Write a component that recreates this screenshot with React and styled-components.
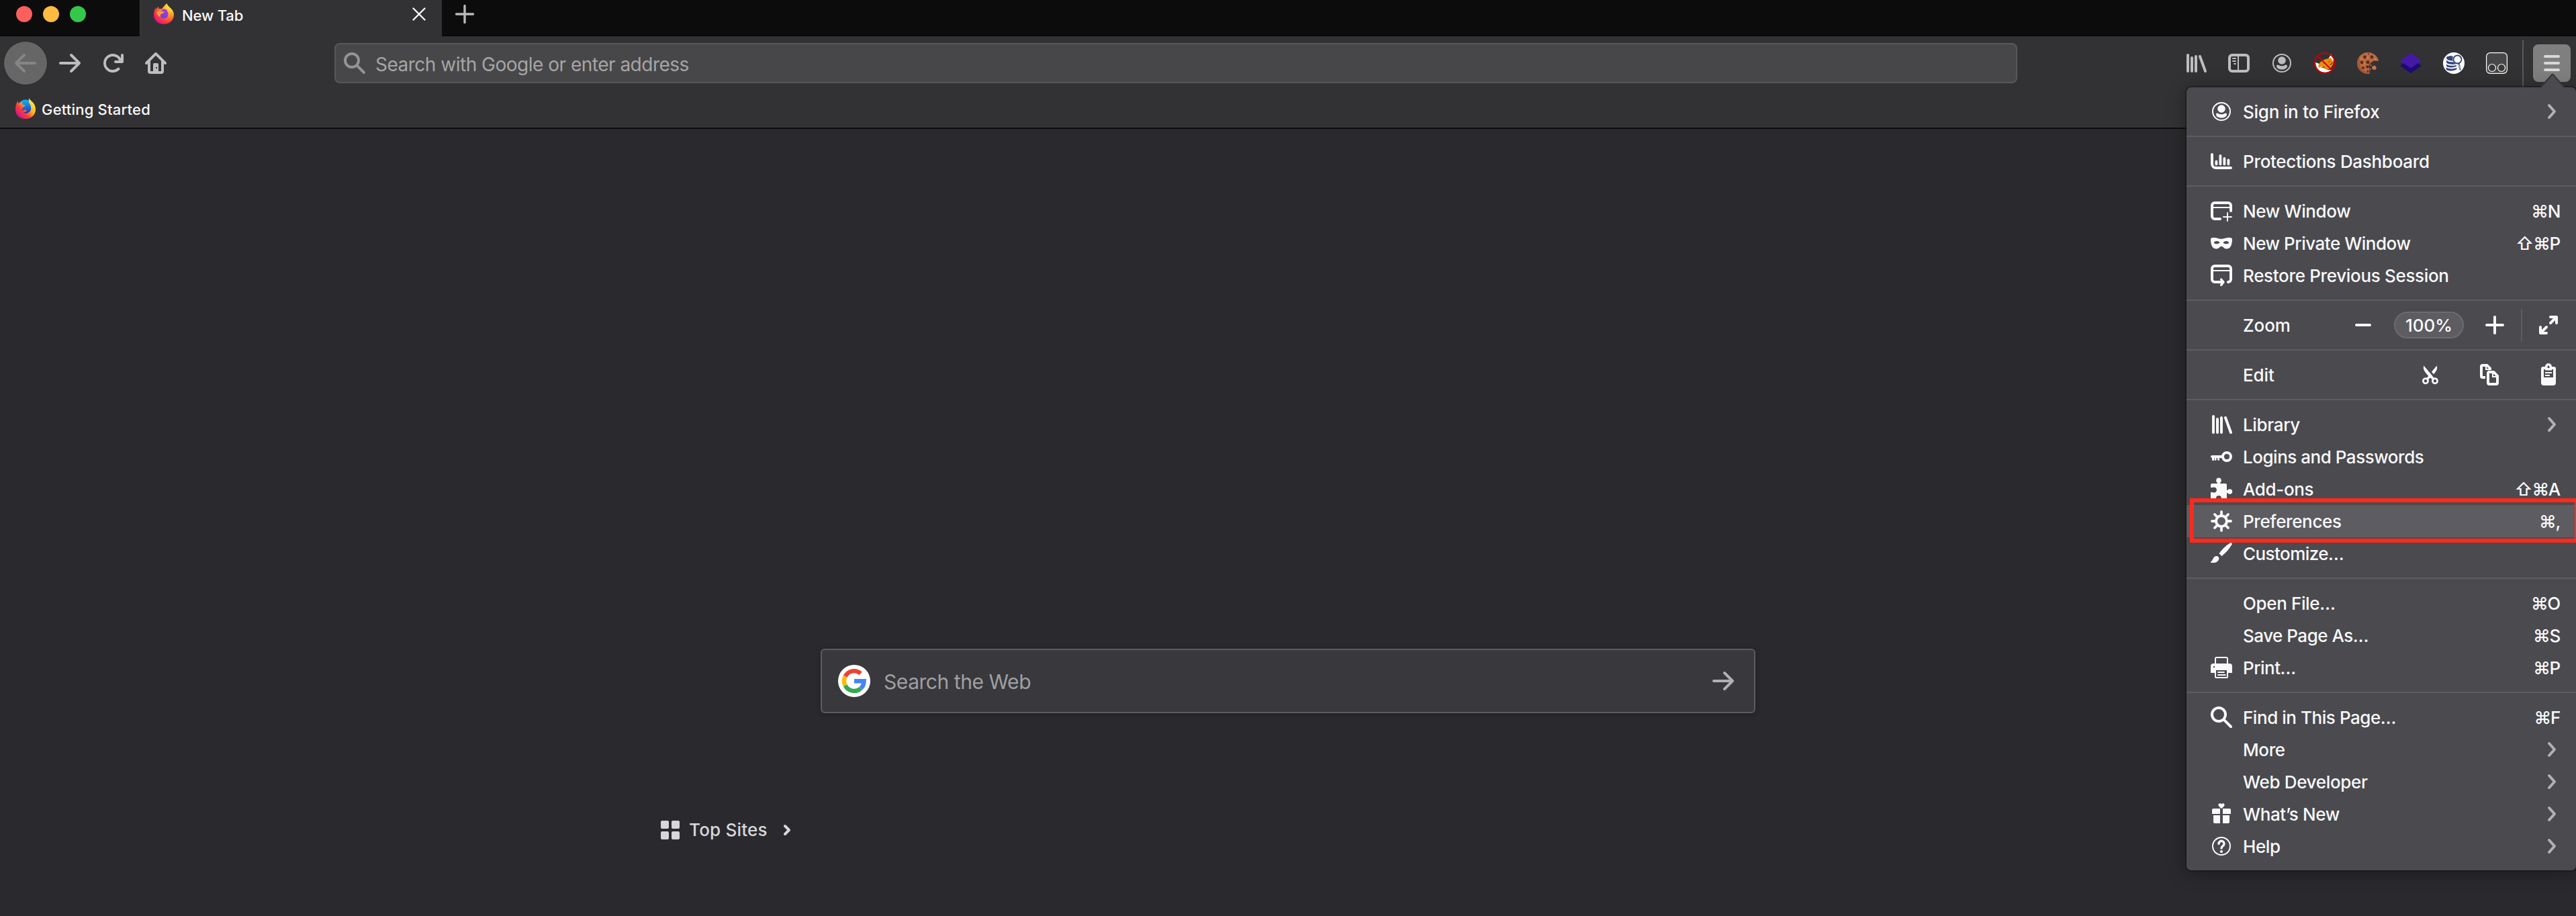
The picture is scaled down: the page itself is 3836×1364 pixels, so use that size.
import React from "react";
import styled, { createGlobalStyle } from "styled-components";

const GlobalStyle = createGlobalStyle`
  * { box-sizing: border-box; }
  body { margin: 0; background: #2a2a2e; }
`;

/* ---------- window frame ---------- */

const Window = styled.div`
  position: relative;
  display: flex;
  flex-direction: column;
  width: 3836px;
  height: 1364px;
  overflow: hidden;
  background: #2a2a2e;
  color: #f9f9fa;
  font-family: Inter, "Liberation Sans", sans-serif;
  font-weight: 500;
  font-size: 26px;
  white-space: nowrap;
`;

const Icon = styled.svg`
  display: block;
  flex: none;
  width: ${(p) => p.$size || 32}px;
  height: ${(p) => p.$size || 32}px;
  color: ${(p) => p.$color || "inherit"};
  overflow: visible;
`;

const TabStrip = styled.header`
  display: flex;
  flex: none;
  height: 54px;
  background: #0c0c0d;
  box-shadow: inset 0 -1px 0 #050505;
`;

const TrafficLights = styled.div`
  display: flex;
  gap: 16px;
  width: 208px;
  padding: 9px 0 0 24px;
`;

const Light = styled.span`
  width: 24px;
  height: 24px;
  border-radius: 50%;
  background: ${(p) => p.$color};
`;

const Tab = styled.div`
  display: flex;
  align-items: center;
  width: 450px;
  padding: 0 24px 12px 19px;
  background: #323234;
  border-left: 1px solid #3c3c3e;
`;

const TabTitle = styled.span`
  flex: 1;
  padding: 4px 0 0 11px;
  font-size: 22px;
  line-height: 26px;
  letter-spacing: -0.15px;
`;

const NewTabButton = styled.div`
  padding: 7px 0 0 20px;
`;

const NavBar = styled.nav`
  display: flex;
  flex: none;
  align-items: center;
  height: 80px;
  padding: 0 8px 0 5px;
  background: #323234;
`;

const BackButton = styled.div`
  display: flex;
  align-items: center;
  justify-content: center;
  width: 66px;
  height: 66px;
  margin-right: 17px;
  border-radius: 50%;
  border: 1px solid #29292b;
  background: #666667;
`;

const NavButtons = styled.div`
  display: flex;
  gap: 32px;
`;

const UrlBar = styled.div`
  display: flex;
  align-items: center;
  width: 2506px;
  height: 60px;
  margin: 0 250px;
  padding-left: 12px;
  border: 2px solid #58585a;
  border-radius: 8px;
  background: #474749;
  color: #a5a5a6;
`;

const UrlHint = styled.span`
  padding: 3px 0 0 15px;
  font-size: 28px;
  font-weight: 400;
  letter-spacing: -0.5px;
`;

const ToolDivider = styled.span`
  align-self: stretch;
  width: 2px;
  margin: 6px 14px 4px 22px;
  background: #5a5a5c;
`;

const MenuButton = styled.div`
  display: flex;
  flex-direction: column;
  align-items: center;
  gap: 6px;
  width: 56px;
  height: 56px;
  padding-top: 16px;
  border-radius: 8px;
  background: #7f7f80;
`;

const MenuBar = styled.span`
  width: 24px;
  height: 4px;
  border-radius: 2px;
  background: #d8d8d8;
`;

const BookmarksBar = styled.div`
  display: flex;
  flex: none;
  align-items: center;
  height: 58px;
  padding: 0 0 0 22px;
  background: #323234;
  border-bottom: 2px solid #0c0c0d;
`;

const BookmarkLabel = styled.span`
  padding: 2px 0 0 8px;
  font-size: 22px;
  letter-spacing: 0.2px;
`;

/* ---------- new tab page ---------- */

const Page = styled.main`
  display: flex;
  flex: 1;
  flex-direction: column;
  align-items: center;
  padding-top: 774px;
`;

const SearchBox = styled.div`
  display: flex;
  align-items: center;
  width: 1392px;
  height: 96px;
  padding: 0 30px 0 24px;
  border: 2px solid #5c5c61;
  border-radius: 6px;
  background: #38383d;
  box-shadow: 0 2px 8px rgba(0, 0, 0, 0.25);
`;

const SearchHint = styled.span`
  flex: 1;
  padding: 2px 0 0 20px;
  font-size: 30px;
  font-weight: 400;
  letter-spacing: -0.45px;
  color: #a0a0a2;
`;

const TopSites = styled.section`
  display: flex;
  align-items: center;
  width: 1868px;
  margin-top: 157px;
  color: #d7d7db;
`;

const TopSitesTitle = styled.h3`
  margin: 0;
  padding: 1px 22px 0 14px;
  font-size: 26px;
  font-weight: 500;
  line-height: 32px;
  letter-spacing: 0.2px;
`;

/* ---------- application menu ---------- */

const Panel = styled.aside`
  position: absolute;
  left: 3256px;
  top: 130px;
  width: 580px;
  border-radius: 7px;
  background: #4a4a4f;
  box-shadow: 0 0 0 2px rgba(24, 24, 26, 0.55), 0 4px 28px rgba(0, 0, 0, 0.35);
`;

const PanelArrow = styled.svg`
  position: absolute;
  left: 527px;
  top: -20px;
  width: 36px;
  height: 21px;
`;

const Section = styled.div`
  padding: 12px 0;
  & + & { border-top: 2px solid #5c5c61; }
`;

const Row = styled.div`
  position: relative;
  display: flex;
  align-items: center;
  height: 48px;
  padding: 0 23px 0 36px;
  background: ${(p) => (p.$active ? "#5c5c61" : "transparent")};
`;

const IconSlot = styled.span`
  width: 32px;
  height: 32px;
  margin-right: 16px;
`;

const Label = styled.span`
  flex: 1;
  letter-spacing: ${(p) => p.$track ?? -0.38}px;
`;

const Shortcut = styled.span`
  letter-spacing: -1.3px;
  margin-right: 1px;
`;

const ChevronSlot = styled.span`
  display: flex;
  margin-right: 4px;
  color: #b1b1b3;
`;

const Controls = styled.div`
  display: flex;
  align-items: center;
  gap: ${(p) => p.$gap}px;
  margin-right: 2px;
`;

const ZoomLevel = styled.span`
  display: flex;
  align-items: center;
  justify-content: center;
  width: 104px;
  height: 40px;
  border: 2px solid #6b6b70;
  border-radius: 20px;
  background: #5c5c61;
`;

const ZoomDivider = styled.span`
  width: 2px;
  height: 48px;
  margin: 0 -7px;
  background: #5c5c61;
`;

const HighlightBox = styled.span`
  position: absolute;
  left: 5px;
  top: -10px;
  z-index: 1;
  width: 579px;
  height: 66px;
  border: 6px solid #ff2a1c;
  box-shadow: inset 0 4px 0 #4a4a4f, inset 0 -2px 0 #4a4a4f;
`;

/* ---------- icons ---------- */

const S = ({ size, color, children, ...rest }) => (
  <Icon viewBox="0 0 16 16" fill="currentColor" $size={size} $color={color} {...rest}>
    {children}
  </Icon>
);

const line = (w = 2) => ({
  fill: "none",
  stroke: "currentColor",
  strokeWidth: w,
  strokeLinecap: "round",
  strokeLinejoin: "round",
});

const Back = (p) => (
  <S {...p}><path d="M15 7H3.414l4.293-4.293a1 1 0 0 0-1.414-1.414l-6 6a1 1 0 0 0 0 1.414l6 6a1 1 0 0 0 1.414-1.414L3.414 9H15a1 1 0 0 0 0-2z" /></S>
);
const Forward = (p) => (
  <S {...p}><path d="M1 7h11.586L8.293 2.707a1 1 0 0 1 1.414-1.414l6 6a1 1 0 0 1 0 1.414l-6 6a1 1 0 0 1-1.414-1.414L12.586 9H1a1 1 0 0 1 0-2z" /></S>
);
const Reload = (p) => (
  <S {...p}><path d="M15 1a1 1 0 0 0-1 1v2.418A6.995 6.995 0 1 0 8 15a6.954 6.954 0 0 0 4.95-2.05 1 1 0 0 0-1.414-1.414A5.019 5.019 0 1 1 12.549 6H10a1 1 0 0 0 0 2h5a1 1 0 0 0 1-1V2a1 1 0 0 0-1-1z" /></S>
);
const Home = (p) => (
  <S {...p}>
    <path d="M15.707 7.293l-7-7a1 1 0 0 0-1.414 0l-7 7a1 1 0 0 0 1.414 1.414L2 8.414V14a2 2 0 0 0 2 2h8a2 2 0 0 0 2-2V8.414l.293.293a1 1 0 0 0 1.414-1.414zM12 14H4V6.414l4-4 4 4z" />
    <path fillRule="evenodd" d="M7 8h2a1 1 0 0 1 1 1v5.500H6V9a1 1 0 0 1 1-1zM8 11v1h1v-1z" />
  </S>
);
const Search = (p) => (
  <S {...p}><path d="M15.707 14.293l-4.822-4.822a6.019 6.019 0 1 0-1.414 1.414l4.822 4.822a1 1 0 0 0 1.414-1.414zM6 10a4 4 0 1 1 4-4 4 4 0 0 1-4 4z" /></S>
);
const Library = (p) => (
  <S {...p}><path d="M2 2v12M5 4v10M8 3v11M11 3l4 11" {...line(2)} /></S>
);
const Sidebar = (p) => (
  <S {...p}>
    <rect x="1" y="2" width="14" height="12" rx="2" {...line(2)} />
    <path d="M7.5 3v10M3.5 4.5h2M3.5 6.5h2M4.5 8.5h1" {...line(1)} />
  </S>
);
const Account = (p) => (
  <S {...p}>
    <circle cx="8" cy="8" r="6.5" {...line(1)} />
    <circle cx="8" cy="6" r="2.9" />
    <path d="M4 10.2C4 9.2 5 9 5.7 9.5 7 10.4 9 10.4 10.3 9.5 11 9 12 9.2 12 10.2c0 1.500-2 2.600-4 2.600s-4-1.100-4-2.600z" />
  </S>
);
const Dashboard = (p) => (
  <S {...p}>
    <path d="M1 3v7a3 3 0 0 0 3 3h11" {...line(2)} />
    <path d="M4.200 8.200v2M7.200 4v6.200M10.200 6v4.200M13.200 7.200v3" {...line(1.9)} />
  </S>
);
const NewWindow = (p) => (
  <S {...p}>
    <path d="M15 8V4a2 2 0 0 0-2-2H3a2 2 0 0 0-2 2v8a2 2 0 0 0 2 2h4" {...line(2)} />
    <path d="M2 5.500h12" {...line(1)} />
    <path d="M12.500 9.500v6M9.500 12.500h6" {...line(1)} />
  </S>
);
const Mask = (p) => (
  <S {...p}>
    <path fillRule="evenodd" d="M0 5.300C0 4.300.8 3.900 2 3.900c2.600 0 4.200 1 6 1s3.400-1 6-1c1.200 0 2 .4 2 1.400 0 4-1.200 7-4.200 7-1.900 0-2.600-1.900-3.800-1.900s-1.900 1.900-3.800 1.900C1.200 12.300 0 9.300 0 5.300zM4.500 6.500c-1.100 0-1.900.5-2.200 1.200.5.500 1.200.9 2.200.9s1.700-.4 2.200-.9c-.3-.7-1.100-1.200-2.200-1.200zm7 0c-1.100 0-1.900.5-2.200 1.200.5.500 1.200.9 2.200.9s1.700-.4 2.200-.9c-.3-.7-1.100-1.200-2.200-1.200z" />
  </S>
);
const Restore = (p) => (
  <S {...p}>
    <path d="M13 13a2 2 0 0 0 2-2V3a2 2 0 0 0-2-2H3a2 2 0 0 0-2 2v8a2 2 0 0 0 2 2h5.500" {...line(2)} />
    <path d="M2 4.500h12" {...line(1)} />
    <path d="M7.800 11l1.700 2-1.700 2.200" {...line(1.700)} />
  </S>
);
const KeyIcon = (p) => (
  <S {...p}>
    <circle cx="12" cy="8" r="3" {...line(2)} />
    <path d="M1 7h8v2H6.500v1.200a.7.7 0 0 1-1.400 0V9h-.8v1.200a.7.7 0 0 1-1.400 0V9H2.600v1.200a.8.8 0 0 1-1.600 0V9a1 1 0 0 1 0-2z" />
  </S>
);
const Puzzle = (p) => (
  <S {...p}>
    <circle cx="6" cy="1.700" r="1.900" />
    <circle cx="14.200" cy="10" r="1.900" />
    <path d="M1 4h4V2h2v2h4a1 1 0 0 1 1 1v4h1.500v2H12v4a1 1 0 0 1-1 1H8v-1a2 2 0 1 0-4 0v1H1a1 1 0 0 1-1-1v-4.500h1.500a2 2 0 1 0 0-3.500H0V5a1 1 0 0 1 1-1z" />
  </S>
);
const Gear = (p) => (
  <S {...p}>
    <circle cx="8" cy="8" r="4" {...line(2)} />
    <path d="M8 1v2M8 13v2M1 8h2M13 8h2M3 3l1.700 1.700M11.300 11.300L13 13M13 3l-1.700 1.700M4.700 11.300L3 13" {...line(1.900)} />
  </S>
);
const Brush = (p) => (
  <S {...p}>
    <path d="M6.200 8.300C8 5.500 11 2.500 14.500.3c.9-.5 1.700.3 1.300 1.100C13.800 4.800 11 8 8.200 10.100c-.7-.9-1.200-1.400-2-1.800z" />
    <path d="M3.800 10.100c1.500-.4 2.700.9 2.300 2.300C5.500 14.500 3 15.400 0 14.900v-.6c1.600-.5 1.500-3.700 3.800-4.200z" />
  </S>
);
const Printer = (p) => (
  <S {...p}>
    <path d="M3.500 5.500v-4a1 1 0 0 1 1-1h7a1 1 0 0 1 1 1v4" {...line(1)} />
    <path fillRule="evenodd" d="M2 5h12a2 2 0 0 1 2 2v5h-3v3a1 1 0 0 1-1 1H4a1 1 0 0 1-1-1v-3H0V7a2 2 0 0 1 2-2zm0 2v1h1V7zm2 3v5h8v-5z" />
    <path d="M5.500 11.500h4.500M5.500 13.500h5.500" {...line(0.9)} />
  </S>
);
const Gift = (p) => (
  <S {...p}>
    <path d="M8 4C6.800 3.200 5.700 2.300 5.700 1.300 5.700 0 7.400-.3 8 .8 8.600-.3 10.300 0 10.300 1.300c0 1-1.100 1.900-2.300 2.700z" />
    <path d="M2 4h5v4H1V5a1 1 0 0 1 1-1zM9 4h5a1 1 0 0 1 1 1v3H9zM2 9h5v6H3a1 1 0 0 1-1-1zM9 9h5v5a1 1 0 0 1-1 1H9z" />
  </S>
);
const Help = (p) => (
  <S {...p}>
    <circle cx="8" cy="8" r="6.500" {...line(1)} />
    <path d="M6 6.200a2 2 0 1 1 3.100 1.650C8.300 8.400 8 8.700 8 9.500" {...line(1.700)} />
    <circle cx="8" cy="12" r="1.050" />
  </S>
);
const Chevron = () => (
  <Icon viewBox="0 0 24 24" $size={24}>
    <path d="M11 3l8 9-8 9" {...line(4)} />
  </Icon>
);
const Minus = (p) => <S {...p}><path d="M3 8h10" {...line(2)} /></S>;
const Plus = (p) => <S {...p}><path d="M2 8h12M8 2v12" {...line(2)} /></S>;
const Expand = (p) => (
  <S {...p}>
    <path d="M9.500 6.500L13 3M6.500 9.500L3 13" {...line(2)} />
    <path d="M9.500 2H14v4.500M6.500 14H2V9.500" {...line(2)} />
  </S>
);
const Cut = (p) => (
  <S {...p}>
    <circle cx="4.500" cy="12.600" r="1.800" {...line(1.400)} />
    <circle cx="11.500" cy="12.600" r="1.800" {...line(1.400)} />
    <path d="M3.200 1.300C2.400 3.600 3.300 5.200 6.600 9L5 10.700l1.200 1.200L8 10.200l1.800 1.700 1.200-1.200L9.100 8.300zM12.800 1.300c.8 2.300-.1 4-2.300 6.300L9 5.900z" />
  </S>
);
const Copy = (p) => (
  <S {...p}>
    <path fillRule="evenodd" d="M3 0h3.600l2.900 2.900V4.500L8 4.500V4.800L6.600 4.500H5V2H3v7h2v2H3a2 2 0 0 1-2-2V2a2 2 0 0 1 2-2zM6 2v1.500h1.500z" />
    <path fillRule="evenodd" d="M8 5h3.600L15 8.500V14a2 2 0 0 1-2 2H8a2 2 0 0 1-2-2V7a2 2 0 0 1 2-2zm0 2v7h5v-4h-3V7zM11 7.200V9h1.800z" />
  </S>
);
const Paste = (p) => (
  <S {...p}>
    <path fillRule="evenodd" d="M4 2h1.500a2.500 2.500 0 0 1 5 0H12a1.500 1.500 0 0 1 1.500 1.500V14a2 2 0 0 1-2 2h-7a2 2 0 0 1-2-2V3.500A1.500 1.500 0 0 1 4 2zm3.300 0v1h1.400V2a.7.7 0 0 0-1.400 0zM4.500 4v6h7V4h-1v.8h-5V4zM5.500 6h5v1h-5zm0 2h3.500v1H5.500z" />
  </S>
);

const FirefoxLogo = () => (
  <Icon viewBox="0 0 32 32">
    <defs>
      <radialGradient id="fxBody" cx="0.82" cy="0.12" r="1">
        <stop offset="0" stopColor="#fff44f" />
        <stop offset="0.35" stopColor="#ffb02a" />
        <stop offset="0.6" stopColor="#ff6a30" />
        <stop offset="0.82" stopColor="#ff2f4b" />
        <stop offset="1" stopColor="#e0128a" />
      </radialGradient>
      <linearGradient id="fxGlobe" x1="0.7" y1="0" x2="0.3" y2="1">
        <stop offset="0" stopColor="#b833e1" />
        <stop offset="1" stopColor="#5b4bd6" />
      </linearGradient>
    </defs>
    <path fill="url(#fxBody)" d="M20.500 0C21 3 24 5 27 8c3 3 4 6 4 9 0 8-6.500 14-15 14S1 25 1 17c0-4 1-8 3-10.500L4.500 9C5.500 7.500 6.500 6 8 5l.5 3c1.500 0 3.500 0 4.500.5C14 6.500 17 3 20.500 0z" />
    <circle cx="16" cy="16" r="6.600" fill="url(#fxGlobe)" />
    <path fill="#a436dc" d="M13 9.500c3-1.800 7-.6 8.500 1.500l-4 1.500z" />
    <path fill="#ffa02e" d="M5 13c2.500-1.500 5.500-1.800 8-1.500 1 .8 2.500 1.200 4 1-.8 2-3 2.500-4.800 3.200-1.400.8-1.800 2.400-1 4.300C7.500 19 5 16 5 13z" />
  </Icon>
);

const FirefoxClassicLogo = () => (
  <Icon viewBox="0 0 32 32">
    <defs>
      <linearGradient id="fcBody" x1="0.85" y1="0.1" x2="0.1" y2="0.85">
        <stop offset="0" stopColor="#fff04a" />
        <stop offset="0.4" stopColor="#ffae22" />
        <stop offset="0.68" stopColor="#ff3a3a" />
        <stop offset="1" stopColor="#d5118f" />
      </linearGradient>
      <linearGradient id="fcGlobe" x1="0.4" y1="0" x2="0.5" y2="1">
        <stop offset="0" stopColor="#12b2f5" />
        <stop offset="0.6" stopColor="#1560dd" />
        <stop offset="1" stopColor="#2b2390" />
      </linearGradient>
    </defs>
    <circle cx="16" cy="14" r="11.500" fill="url(#fcGlobe)" />
    <path fill="url(#fcBody)" d="M21 0c1.200 2 3.500 4 6.500 7 2.700 3.200 3.500 7 3.500 10 0 8-6.500 14-15 14S1 25.500 1 17C1 12 2 8 4.500 4.500l1 4C7.500 6.500 9.500 6 11.500 6.500c-.5 1.500-.3 2.700.5 3.500l3.500.5c0 1.700-1.800 2.300-3.800 3.300.4 2-.2 2.700-1.700 3.700 1.700 1.200 3.500.5 5.500 0 2 0 3 1 2 2-1.500 1.300-3 2-5 2 4 2.500 10 1 11.500-4 .8-3.500-.5-7-2.500-10-.8-2.500-.8-5 0-7.500z" />
  </Icon>
);

const NoFox = () => (
  <Icon viewBox="0 0 32 32">
    <path fill="#fff" d="M21 10l4.500-7.500 3.500 7-1 8zM2 15l9 3-1 10C5 26 2.500 21 2 15z" />
    <path fill="#ee8a0c" d="M6 20c2-6 8-9.500 13.500-10.500L25 8l3.500 6c0 6-4 10.500-9 12l-8.500 1.500z" />
    <path fill="#fff" d="M7 24l4-3.500 2.500 3 6 2.500h6c-3 4-12 5-17 1.500z" />
    <path fill="none" stroke="#7a3c08" strokeWidth="1.200" d="M11 22.500l5-1M22 13l1 2M24 19l3.500-4M14 16l1 .5" />
    <circle cx="16" cy="16" r="15" fill="none" stroke="#c80005" strokeWidth="2" />
    <path stroke="#c80005" strokeWidth="2" d="M5.400 5.400l21.200 21.200" />
  </Icon>
);

const Cookie = () => (
  <Icon viewBox="0 0 32 32">
    <path fill="#b96b40" d="M16 0c5 0 9.500 2 12 5l2 2.500 2 4c0 1-1 1.500-2 1.500-3-1-6-.5-8 1.500-3 2-5 4-4 8 .5 3 1 5.500 0 7.500l1.500 2H16A16 16 0 0 1 16 0z" />
    <path fill="#8f4c31" d="M4 6A16 16 0 0 0 16 32h3l-2-2C9 29 2 22 4 6z" opacity=".55" />
    <g fill="#5d2b23">
      <circle cx="11.500" cy="7" r="2.400" /><circle cx="22" cy="7" r="2.400" />
      <circle cx="7" cy="15" r="2.400" /><circle cx="16" cy="14.500" r="2.600" />
      <circle cx="9" cy="23" r="2" /><circle cx="15.500" cy="21.500" r="2.200" />
      <circle cx="16" cy="28" r="1.500" /><circle cx="17" cy="2.500" r="1" />
    </g>
    <g fill="#e4a052">
      <circle cx="6.500" cy="9" r="1" /><circle cx="16" cy="7.500" r="1" />
      <circle cx="27" cy="10" r="1" /><circle cx="11" cy="17" r=".8" />
    </g>
    <path fill="#c4774a" d="M22.500 21l4-1.500 2.500 3-1.500 3.500-4-.5-1.500-2z" />
    <circle cx="20.500" cy="19" r="1.200" fill="#b96b40" /><circle cx="20" cy="25" r="1.100" fill="#b96b40" />
  </Icon>
);

const Layers = () => (
  <Icon viewBox="0 0 32 32">
    <path fill="#1e0b73" d="M0 20l5-4h22l5 4-16 11z" />
    <path fill="#4519a8" d="M16 1l16 11.500L16 23.500 0 12.500z" />
  </Icon>
);

const Database = () => (
  <Icon viewBox="0 0 32 32">
    <circle cx="16" cy="16" r="16" fill="#fff" />
    <path fill="#33457c" d="M5 8c0-3 8-3.500 10-2-1 3-1 5 0 6.500C9 12.500 5 11 5 8zM5 11.500c2 2.500 6 3 10.500 2.800 1 1.700 2.500 2.700 4 3.200C13 18.500 5 17.500 5 14.500zM5 17.500c3 2.500 9 3 15 1.500v1.500c-5 3-15 2.500-15-.5zM4.500 22.500c4 2.500 11 2.500 16 .5v2c-3 3.200-16 3.500-16-.5z" />
    <circle cx="21.500" cy="10.500" r="6" fill="#fff" stroke="#33457c" strokeWidth="1.800" />
    <path d="M23.500 17l2 8.500" stroke="#33457c" strokeWidth="2.200" strokeLinecap="round" />
    <path d="M23.700 18l1.600 7" stroke="#fff" strokeWidth=".7" />
  </Icon>
);

const Goggles = () => (
  <Icon viewBox="0 0 32 32">
    <rect x=".6" y=".6" width="30.800" height="30.800" rx="5.500" fill="#474747" stroke="#fff" strokeWidth="1.200" />
    <circle cx="9" cy="23" r="5.500" fill="#3a3a3b" stroke="#fff" strokeWidth="1.200" />
    <circle cx="23" cy="23" r="5.500" fill="#3a3a3b" stroke="#fff" strokeWidth="1.200" />
  </Icon>
);

const GoogleLogo = () => (
  <Icon viewBox="0 0 48 48" $size={48}>
    <circle cx="24" cy="24" r="24" fill="#fff" />
    <g fill="none" strokeWidth="6.400">
      <path stroke="#ea4335" d="M10.700 17.200A14.800 14.800 0 0 1 33.700 12.900" />
      <path stroke="#fbbc05" d="M10.700 30.800A14.800 14.800 0 0 1 10.700 17.200" />
      <path stroke="#34a853" d="M33.800 35.100A14.800 14.800 0 0 1 10.700 30.800" />
      <path stroke="#4285f4" d="M24 24.200h14.600C38.400 28.500 37 32.500 33.800 35.100" />
    </g>
  </Icon>
);

/* ---------- menu data ---------- */

const SECTIONS = [
  [{ label: "Sign in to Firefox", icon: Account, track: -0.25, more: true }],
  [{ label: "Protections Dashboard", icon: Dashboard, track: -0.3 }],
  [
    { label: "New Window", icon: NewWindow, keys: "⌘N" },
    { label: "New Private Window", icon: Mask, keys: "⇧⌘P", track: -0.48 },
    { label: "Restore Previous Session", icon: Restore, track: -0.33 },
  ],
  [{ label: "Zoom", kind: "zoom", track: -0.1 }],
  [{ label: "Edit", kind: "edit", track: -0.1 }],
  [
    { label: "Library", icon: Library, more: true },
    { label: "Logins and Passwords", icon: KeyIcon, track: -0.48 },
    { label: "Add-ons", icon: Puzzle, keys: "⇧⌘A" },
    { label: "Preferences", icon: Gear, keys: "⌘,", active: true },
    { label: "Customize…", icon: Brush, track: -0.55 },
  ],
  [
    { label: "Open File…", keys: "⌘O" },
    { label: "Save Page As…", keys: "⌘S", track: -0.5 },
    { label: "Print…", icon: Printer, keys: "⌘P", track: -0.5 },
  ],
  [
    { label: "Find in This Page…", icon: Search, keys: "⌘F", track: -0.45 },
    { label: "More", more: true },
    { label: "Web Developer", more: true, track: -0.33 },
    { label: "What’s New", icon: Gift, more: true },
    { label: "Help", icon: Help, more: true },
  ],
];

function ZoomControls() {
  return (
    <Controls $gap={30}>
      <Minus />
      <ZoomLevel>100%</ZoomLevel>
      <Plus />
      <ZoomDivider />
      <Expand />
    </Controls>
  );
}

function EditControls() {
  return (
    <Controls $gap={56}>
      <Cut />
      <Copy />
      <Paste />
    </Controls>
  );
}

function MenuRow({ item }) {
  const Glyph = item.icon;
  return (
    <Row $active={item.active}>
      <IconSlot>{Glyph && <Glyph />}</IconSlot>
      <Label $track={item.track}>{item.label}</Label>
      {item.keys && <Shortcut>{item.keys}</Shortcut>}
      {item.more && <ChevronSlot><Chevron /></ChevronSlot>}
      {item.kind === "zoom" && <ZoomControls />}
      {item.kind === "edit" && <EditControls />}
      {item.active && <HighlightBox />}
    </Row>
  );
}

function AppMenu() {
  return (
    <Panel>
      <PanelArrow viewBox="0 0 36 21">
        <path d="M0 20.500L18 0l18 20.500" fill="#4a4a4f" stroke="#343437" strokeWidth="2" />
        <path d="M1 20h34v1H1z" fill="#4a4a4f" />
      </PanelArrow>
      {SECTIONS.map((rows, i) => (
        <Section key={i}>
          {rows.map((item) => <MenuRow key={item.label} item={item} />)}
        </Section>
      ))}
    </Panel>
  );
}

export default function App() {
  const tint = "#bdbdbe";
  return (
    <Window>
      <GlobalStyle />
      <TabStrip>
        <TrafficLights>
          <Light $color="#fc605c" />
          <Light $color="#fdbb40" />
          <Light $color="#34c749" />
        </TrafficLights>
        <Tab>
          <FirefoxLogo />
          <TabTitle>New Tab</TabTitle>
          <Icon viewBox="0 0 20 20" $size={20}>
            <path d="M1.500 1.500l17 17M18.500 1.500l-17 17" {...line(2.400)} />
          </Icon>
        </Tab>
        <NewTabButton>
          <Icon viewBox="0 0 28 28" $size={28} $color="#b9b9ba">
            <path d="M14 1.500v25M1.500 14h25" {...line(3.400)} />
          </Icon>
        </NewTabButton>
      </TabStrip>

      <NavBar>
        <BackButton><Back color="#858586" /></BackButton>
        <NavButtons>
          <Forward color={tint} />
          <Reload color={tint} />
          <Home color={tint} />
        </NavButtons>
        <UrlBar>
          <Search color="#949495" />
          <UrlHint>Search with Google or enter address</UrlHint>
        </UrlBar>
        <NavButtons>
          <Library color={tint} />
          <Sidebar color={tint} />
          <Account color={tint} />
          <NoFox />
          <Cookie />
          <Layers />
          <Database />
          <Goggles />
        </NavButtons>
        <ToolDivider />
        <MenuButton>
          <MenuBar /><MenuBar /><MenuBar />
        </MenuButton>
      </NavBar>

      <BookmarksBar>
        <FirefoxClassicLogo />
        <BookmarkLabel>Getting Started</BookmarkLabel>
      </BookmarksBar>

      <Page>
        <SearchBox>
          <GoogleLogo />
          <SearchHint>Search the Web</SearchHint>
          <Forward color="#b1b1b3" />
        </SearchBox>
        <TopSites>
          <Icon viewBox="0 0 28 28" $size={28} fill="currentColor">
            <rect width="12" height="12" rx="2" />
            <rect x="16" width="12" height="12" rx="2" />
            <rect y="16" width="12" height="12" rx="2" />
            <rect x="16" y="16" width="12" height="12" rx="2" />
          </Icon>
          <TopSitesTitle>Top Sites</TopSitesTitle>
          <Icon viewBox="0 0 16 16" $size={16}>
            <path d="M4 2l6 6-6 6" {...line(4)} />
          </Icon>
        </TopSites>
      </Page>

      <AppMenu />
    </Window>
  );
}
